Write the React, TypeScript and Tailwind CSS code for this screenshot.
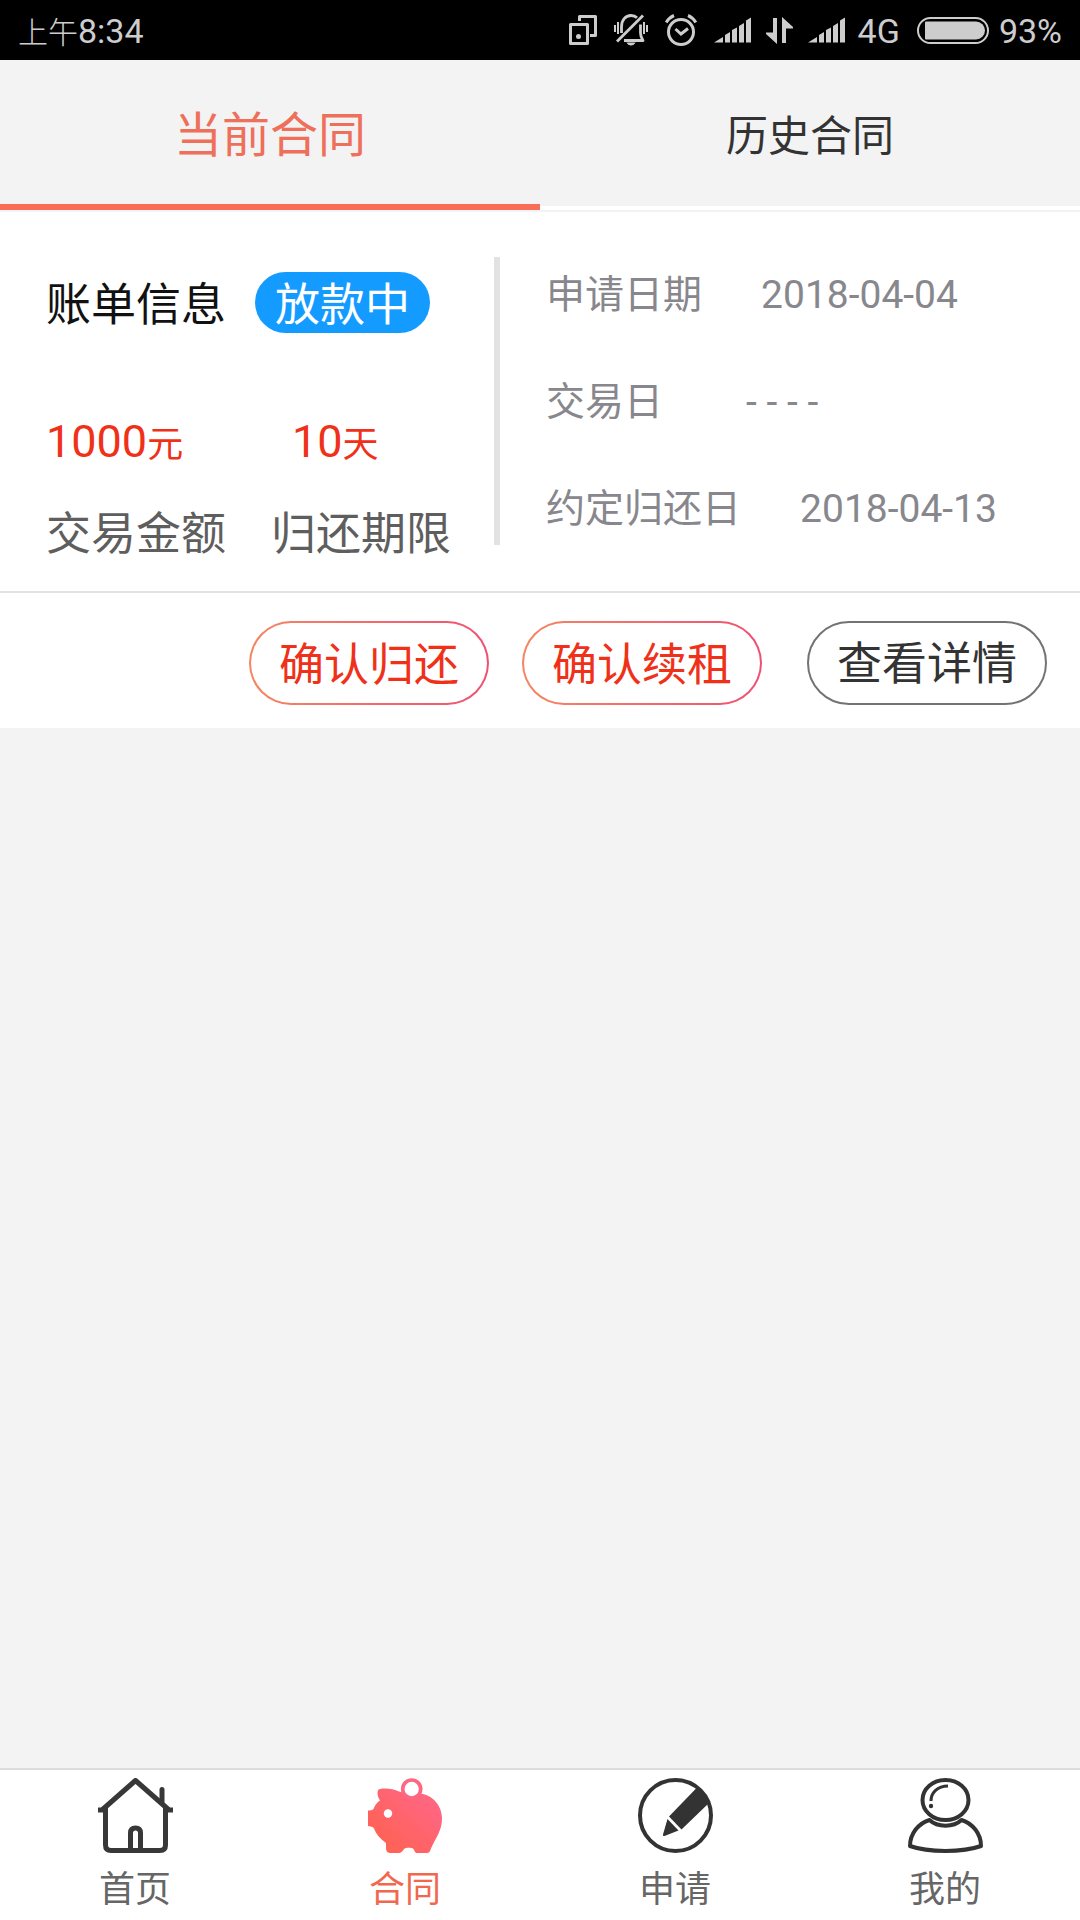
import { useState, type ReactNode } from 'react'
import clsx from 'clsx'

function ScreenLockIcon() {
  return (
    <svg className="h-[30px] w-[28px]" viewBox="0 0 28 30" fill="none" stroke="currentColor" strokeWidth="3" strokeLinejoin="round">
      <rect x="1.5" y="9.5" width="17" height="19" />
      <path d="M10.5 6V1.5h16v19H21" />
      <circle cx="9.5" cy="21.5" r="2.5" fill="currentColor" stroke="none" />
    </svg>
  )
}

function BellOffIcon() {
  return (
    <svg className="h-[32px] w-[34px]" viewBox="0 0 34 32" fill="none" stroke="currentColor" strokeWidth="2.8">
      <path d="M7.5 19v-6c0-7 4-11.5 9.5-11.5 2.500 0 4.500.8 6 2.300M26.500 10.500V19c0 3 .8 5 2.500 7.500H10" strokeLinejoin="round" />
      <path d="M29 1.500 3 27.500" />
      <path d="M4 8v12M1 11v7M30 8v12M33 11v7" strokeWidth="2" />
      <path d="M12.500 28.500h9c-1 2-2.500 3-4.500 3s-3.500-1-4.500-3z" fill="currentColor" stroke="none" />
    </svg>
  )
}

function AlarmIcon() {
  return (
    <svg className="h-[32px] w-[32px]" viewBox="0 0 32 32" fill="none" stroke="currentColor" strokeWidth="3">
      <circle cx="16" cy="18" r="12.500" />
      <path d="m10.500 15 5.500 5 7-5.500" />
      <path d="M1.200 8.500C3 5.500 5.500 3 9 1.500M30.800 8.500C29 5.500 26.500 3 23 1.500" />
    </svg>
  )
}

function SignalIcon() {
  return (
    <svg className="h-[26px] w-[37px]" viewBox="0 0 37 26" fill="currentColor">
      <path d="M0 25.500 9 20v5.500zM11 18l5-3v10.500h-5zM18 13l5-2.500v15h-5zM25 9l5-3v19.500h-5zM32 3.500 37 .5v25h-5z" />
    </svg>
  )
}

function DataArrowsIcon() {
  return (
    <svg className="h-[27px] w-[27px]" viewBox="0 0 27 27" fill="currentColor">
      <path d="M7 1h4v26L0 17v-1.500h7zM16 26h4V11.500h7V10L16 0z" />
    </svg>
  )
}

function BatteryIcon() {
  return (
    <svg className="h-[27px] w-[72px]" viewBox="0 0 72 27" fill="none">
      <rect x="1" y="1" width="70" height="25" rx="12.500" stroke="currentColor" strokeWidth="2" />
      <path d="M9 4.500h50a9 9 0 0 1 0 18H9a1 1 0 0 1-1-1v-16a1 1 0 0 1 1-1z" fill="currentColor" />
    </svg>
  )
}

function HomeIcon() {
  return (
    <svg className="size-[75px]" viewBox="0 0 75 75" fill="none" stroke="#383838" strokeWidth="5" strokeLinejoin="round">
      <path d="M0 32h4L37.500 2.500 71 32h4" />
      <path d="M7.500 30v37c0 3.500 2 5.500 5.500 5.500h49c3.500 0 5.500-2 5.500-5.500V30" />
      <path d="M64 25V11.500" strokeLinecap="round" />
      <path d="M32.500 72V55c0-3.500 2-5 5-5s5 1.500 5 5v17" />
    </svg>
  )
}

function PiggyIcon() {
  return (
    <svg className="size-[75px]" viewBox="0 0 75 75">
      <defs>
        <linearGradient id="piggy" x1="0.2" y1="0.8" x2="0.8" y2="0.2">
          <stop offset="0" stopColor="#ff6257" />
          <stop offset="1" stopColor="#ff6680" />
        </linearGradient>
      </defs>
      <path
        fill="url(#piggy)"
        d="M10 12c4-2.500 15-1.500 21 1.500 3 .5 5 1 6 2.500 4 5 11 4.500 15.500-.5 12 1.500 21.500 12 21.500 25 0 12-6 19-11 30-1 3-2 4.500-4 4.500H49c-2.500 0-2-2.500-4-4.500-1.500-1-7.500-1-9 .5-1.500 2-2 3.500-5 4h-8c-3.500 0-5-2-5-5v-5C12 61 8 56 6 50.500 5 48.500 2 48.500 0 48V32.500c2 0 4.500 0 5.500-1.500C7 27 9 24.500 12 22.500 9.500 19 9 15 10 12z"
      />
      <circle cx="43.700" cy="11" r="9" fill="#fff" stroke="#ff6680" strokeWidth="3.600" />
      <circle cx="20" cy="35.500" r="4.200" fill="#fff" />
    </svg>
  )
}

function PencilIcon() {
  return (
    <svg className="size-[75px]" viewBox="0 0 75 75">
      <circle cx="37.500" cy="37.500" r="35.500" fill="none" stroke="#333" strokeWidth="4" />
      <path d="M59 9.500c6 4 10 9 12.500 15L43.500 51.500 31 38.500z" fill="#333" />
      <path d="m29.500 41 11 11.500L26.500 58c-1 .3-1.700-.3-1.500-1.500z" fill="#333" />
    </svg>
  )
}

function UserIcon() {
  return (
    <svg className="size-[75px]" viewBox="0 0 75 75" fill="none" stroke="#333" strokeWidth="4" strokeLinejoin="round">
      <ellipse cx="37.500" cy="22" rx="23" ry="20" />
      <path d="M23 23c0-8.500 6.500-15 17-15" strokeWidth="3" />
      <circle cx="23" cy="28" r="2.200" fill="#333" stroke="none" />
      <path d="M21.500 42C10 45.500 2 56 2 68c18 6.500 53 6.500 71 0 0-12-8-22.500-19.500-26-8 7.500-24 7.500-32 0z" />
    </svg>
  )
}

const navItems: { label: string; icon: ReactNode }[] = [
  { label: '首页', icon: <HomeIcon /> },
  { label: '合同', icon: <PiggyIcon /> },
  { label: '申请', icon: <PencilIcon /> },
  { label: '我的', icon: <UserIcon /> },
]

function StatusBar() {
  return (
    <header className="flex h-[60px] items-center justify-between bg-black px-[18px] text-[#cdcdcd]">
      <div className="flex items-baseline pt-0.5">
        <span className="text-[30px] font-light">上午</span>
        <span className="text-[34px]">8:34</span>
      </div>
      <div className="flex items-center gap-[17px]">
        <ScreenLockIcon />
        <BellOffIcon />
        <AlarmIcon />
        <div className="flex items-center gap-[15px]">
          <SignalIcon />
          <DataArrowsIcon />
          <SignalIcon />
        </div>
        <span className="-ml-1 pt-0.5 text-[34px]">4G</span>
        <div className="flex items-center gap-2.5">
          <BatteryIcon />
          <span className="pt-0.5 text-[34px]">93%</span>
        </div>
      </div>
    </header>
  )
}

function DateRow({ label, children }: { label: string; children: ReactNode }) {
  return (
    <div className="flex gap-[59px]">
      <dt>{label}</dt>
      <dd>{children}</dd>
    </div>
  )
}

function ContractCard() {
  return (
    <section className="bg-white">
      <div className="flex border-b-2 border-[#e2e2e2] pt-[45px] pb-[26px]">
        <div className="flex flex-col pl-[46px] pt-[15px] text-[45px] leading-[60px]">
          <div className="flex items-center gap-[29px] leading-[54px]">
            <h2 className="pt-[7px] text-[#111]">账单信息</h2>
            <span className="rounded-full bg-[#149bff] px-5 pt-[7px] text-white">放款中</span>
          </div>
          <dl className="mt-[79px] flex gap-[45px]">
            <div className="flex flex-col-reverse gap-[30px]">
              <dt className="text-[#5e5e5e]">交易金额</dt>
              <dd className="text-[#f0311a]">
                1000<span className="text-[36px]">元</span>
              </dd>
            </div>
            <div className="flex flex-col-reverse gap-[30px]">
              <dt className="text-[#5e5e5e]">归还期限</dt>
              <dd className="pl-[21px] text-[#f0311a]">
                10<span className="text-[36px]">天</span>
              </dd>
            </div>
          </dl>
        </div>
        <div className="ml-[43px] h-[288px] w-1.5 bg-[#e2e2e2]" />
        <dl className="ml-[46px] flex flex-col gap-[47px] pt-2 text-[39px] leading-[60px] text-[#87878d]">
          <DateRow label="申请日期">2018-04-04</DateRow>
          <DateRow label="交易日">
            <span className="pl-6">- - - -</span>
          </DateRow>
          <DateRow label="约定归还日">2018-04-13</DateRow>
        </dl>
      </div>

      <div className="flex justify-end gap-[33px] px-[33px] pt-7 pb-[23px] text-[45px] leading-[60px]">
        <button className="h-[84px] w-[240px] rounded-full bg-linear-to-r from-[#f58560] to-[#ef4f72] p-0.5 text-[#f0311a]">
          <span className="flex h-full items-center justify-center rounded-full bg-white pt-1.5">确认归还</span>
        </button>
        <button className="h-[84px] w-[240px] rounded-full bg-linear-to-r from-[#f58560] to-[#ef4f72] p-0.5 text-[#f0311a]">
          <span className="flex h-full items-center justify-center rounded-full bg-white pt-1.5">确认续租</span>
        </button>
        <button className="ml-3 h-[84px] w-[240px] rounded-full border-2 border-[#737373] pt-1 text-[#333]">
          查看详情
        </button>
      </div>
    </section>
  )
}

export default function App() {
  const [tab, setTab] = useState('当前合同')

  return (
    <div className="flex min-h-screen flex-col bg-[#f3f3f3] font-['Roboto','Noto_Sans_CJK_SC',sans-serif]">
      <StatusBar />

      <div role="tablist" className="flex items-stretch border-b-2 border-[#f3f3f3]">
        {['当前合同', '历史合同'].map((name) => (
          <button
            key={name}
            role="tab"
            aria-selected={tab === name}
            onClick={() => setTab(name)}
            className={clsx(
              'h-[150px] flex-1 pt-2 leading-[60px]',
              tab === name
                ? 'border-b-6 border-[#f96c58] text-[48px] text-[#ee705a]'
                : 'border-b-4 border-white text-[42px] text-[#333]',
            )}
          >
            {name}
          </button>
        ))}
      </div>

      <main className="flex-1">
        <ContractCard />
      </main>

      <nav className="flex h-[152px] border-t-2 border-[#dcdcdc] bg-white pt-2">
        {navItems.map(({ label, icon }) => (
          <a
            key={label}
            href="#"
            className={clsx(
              'flex flex-1 flex-col items-center gap-2.5 text-[36px] leading-[54px]',
              label === '合同' ? 'text-[#f0694f]' : 'text-[#666]',
            )}
          >
            {icon}
            {label}
          </a>
        ))}
      </nav>
    </div>
  )
}
